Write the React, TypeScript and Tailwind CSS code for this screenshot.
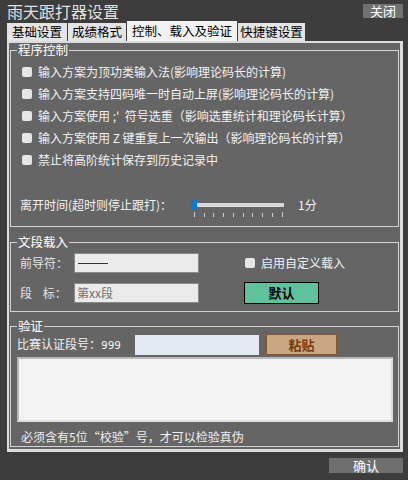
import React from 'react';

const font = { fontFamily: '"Noto Sans CJK SC", "Liberation Sans", sans-serif' };

const options = [
  '输入方案为顶功类输入法(影响理论码长的计算)',
  '输入方案支持四码唯一时自动上屏(影响理论码长的计算)',
  "输入方案使用 ;'  符号选重（影响选重统计和理论码长计算）",
  '输入方案使用 Z 键重复上一次输出（影响理论码长的计算）',
  '禁止将高阶统计保存到历史记录中',
];

const tabs = [
  { name: '基础设置', w: 'w-[60px]', active: false },
  { name: '成绩格式', w: 'w-[58px]', active: false },
  { name: '控制、载入及验证', w: 'w-[110px]', active: true },
  { name: '快捷键设置', w: 'w-[67px]', active: false },
];

const ticks = [4, 14, 23, 33, 43, 53, 62, 72, 82, 92];

const Box: React.FC = () => <span className="block w-[10px] h-[10px] rounded-[2px] bg-[#e6e6e6]" />;

const App: React.FC = () => {
  return (
    <div className="w-[408px] h-[480px] bg-[#3d3d3d] flex flex-col text-[#f2f2f2]" style={font}>
      {/* header */}
      <div className="h-[21px] flex items-center justify-between pl-[7px] pr-[5px]">
        <span className="text-[16px] leading-[18px] text-[#e0e0e0]">雨天跟打器设置</span>
        <span className="w-[40px] h-[14px] bg-[#727272] text-[13px] leading-[14px] text-white flex items-center justify-center">关闭</span>
      </div>

      {/* tabs */}
      <div className="h-[20px] flex items-end gap-[1px] pl-[7px]">
        {tabs.map((t) => (
          <div
            key={t.name}
            className={`${t.w} ${t.active ? 'h-[20px] bg-[#f2f2f2]' : 'h-[18px] bg-[#e4e4e4]'} flex items-center justify-center text-[12.5px] leading-[14px] text-black`}
          >
            {t.name}
          </div>
        ))}
      </div>

      {/* panel */}
      <div className="ml-[7px] w-[396px] h-[411px] border-t-2 border-l-2 border-r-[3px] border-b-[3px] border-[#dcdcdc] bg-[#656565] pl-[1px] flex flex-col">
        {/* 程序控制 */}
        <fieldset className="w-[389px] h-[184px] border border-[#d2d2d2]">
          <legend className="ml-[6px] px-[1px] text-[12.5px] leading-[14px] text-white">程序控制</legend>
          <div className="pt-[4px] pl-[11px] flex flex-col">
            {options.map((o) => (
              <div key={o} className="h-[22px] flex items-center gap-[6px] text-[12px] leading-[14px] whitespace-pre">
                <Box />
                <span>{o}</span>
              </div>
            ))}
            <div className="mt-[23px] h-[22px] flex items-center text-[12px] leading-[14px] -ml-[2px]">
              <span className="w-[170px]">离开时间(超时则停止跟打)：</span>
              <div className="relative w-[96px] h-[22px]">
                <div className="absolute left-[6px] top-[9px] w-[88px] h-[4px] bg-[#d8d8d8]" />
                <div className="absolute left-[1px] top-[6px] w-[6px] h-[10px] rounded-[2px] bg-[#0a78d7]" />
                <svg className="absolute left-0 top-[18px]" width="96" height="5">
                  {ticks.map((x, i) => (
                    <line key={x} x1={x + 0.5} x2={x + 0.5} y1={i === 0 || i === ticks.length - 1 ? 0 : 1} y2="5" stroke="#cfcfcf" strokeWidth="1" />
                  ))}
                </svg>
              </div>
              <span className="ml-[12px]">1分</span>
            </div>
          </div>
        </fieldset>

        {/* 文段载入 */}
        <fieldset className="mt-[8px] w-[389px] h-[77px] border border-[#d2d2d2]">
          <legend className="ml-[6px] px-[1px] text-[12.5px] leading-[14px] text-white">文段载入</legend>
          <div className="pt-[4px] pl-[9px] flex flex-col gap-[10px] text-[12px] leading-[14px] text-[#e6e6e6]">
            <div className="h-[20px] flex items-center">
              <span className="w-[54px]">前导符：</span>
              <div className="w-[125px] h-[20px] bg-[#ebebeb] border border-[#8a8a8a] flex items-center pl-[3px]">
                <span className="block w-[30px] h-[1px] bg-[#333]" />
              </div>
              <span className="ml-[46px]"><Box /></span>
              <span className="ml-[6px] text-[#f2f2f2]">启用自定义载入</span>
            </div>
            <div className="h-[20px] flex items-center">
              <span className="w-[54px]">段&nbsp;&nbsp;&nbsp;&nbsp;标：</span>
              <div className="w-[125px] h-[20px] bg-[#ebebeb] border border-[#8a8a8a] flex items-center pl-[2px] text-[#6f6f6f]">
                第xx段
              </div>
              <button className="ml-[45px] w-[75px] h-[22px] bg-[#5fc29c] border border-black text-black font-bold text-[13px] flex items-center justify-center">
                默认
              </button>
            </div>
          </div>
        </fieldset>

        {/* 验证 */}
        <fieldset className="mt-[7px] w-[389px] h-[128px] border border-[#d2d2d2]">
          <legend className="ml-[6px] px-[1px] text-[12.5px] leading-[14px] text-white">验证</legend>
          <div className="pl-[6px] flex flex-col text-[12px] leading-[14px]">
            <div className="mt-[1px] h-[21px] flex items-center">
              <span className="w-[118px]">
                比赛认证段号：<span className="text-[11px]" style={{ fontFamily: '"DejaVu Sans Mono", monospace' }}>999</span>
              </span>
              <div className="w-[124px] h-[20px] bg-[#e4eaf2]" />
              <button className="ml-[7px] w-[71px] h-[21px] bg-[#c9a782] border border-[#86552a] text-[#7a3a0c] font-bold text-[13px] flex items-center justify-center">
                粘贴
              </button>
            </div>
            <div className="mt-[2px] w-[376px] h-[65px] bg-[#f3f3f3] border-2 border-t-[#b8b8b8] border-l-[#b8b8b8] border-r-[#dedede] border-b-[#dedede]" />
            <div className="mt-[7px] h-[16px] flex items-center pl-[4px] text-[#f0f0f0]">
              必须含有5位“校验”号，才可以检验真伪
            </div>
          </div>
        </fieldset>
      </div>

      {/* footer */}
      <div className="flex justify-end pr-[5px] mt-[6px]">
        <span className="w-[74px] h-[15px] bg-[#6e6e6e] text-white text-[13px] leading-[15px] flex items-center justify-center">确认</span>
      </div>
    </div>
  );
};

export default App;
